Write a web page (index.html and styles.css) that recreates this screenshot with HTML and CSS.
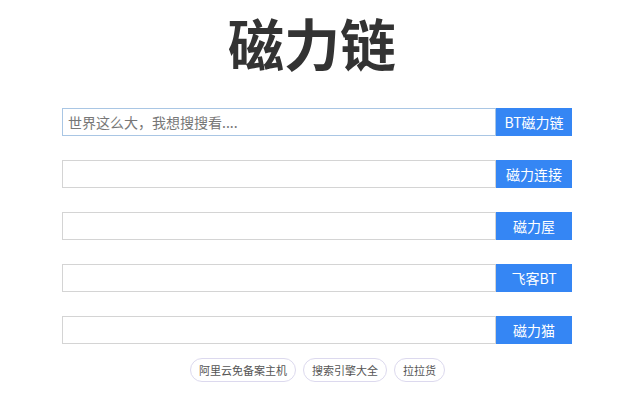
FILE: index.html
```html
<!DOCTYPE html>
<html lang="zh-CN">
<head>
    <meta charset="UTF-8">
    <meta name="viewport" content="width=device-width, initial-scale=1.0">
    <title>磁力链</title>
    <link rel="stylesheet" href="styles.css">
</head>
<body>
    <h1 class="logo">磁力链</h1>

    <div class="search-list">
        <form class="search-row">
            <input class="search-input focused" type="text" placeholder="世界这么大，我想搜搜看....">
            <button class="search-btn" type="button">BT磁力链</button>
        </form>
        <form class="search-row">
            <input class="search-input" type="text">
            <button class="search-btn" type="button">磁力连接</button>
        </form>
        <form class="search-row">
            <input class="search-input" type="text">
            <button class="search-btn" type="button">磁力屋</button>
        </form>
        <form class="search-row">
            <input class="search-input" type="text">
            <button class="search-btn" type="button">飞客BT</button>
        </form>
        <form class="search-row">
            <input class="search-input" type="text">
            <button class="search-btn" type="button">磁力猫</button>
        </form>
    </div>

    <div class="links">
        <a class="tag" href="#">阿里云免备案主机</a>
        <a class="tag" href="#">搜索引擎大全</a>
        <a class="tag" href="#">拉拉货</a>
    </div>
</body>
</html>
```

FILE: styles.css
```css
body {
    margin: 0;
    font-family: "Noto Sans CJK SC", "Liberation Sans", sans-serif;
    background: #fff;
    color: #333;
}
.logo {
    margin: 0;
    padding-top: 12px;
    height: 78px;
    text-align: center;
    font-size: 56px;
    line-height: 60px;
    font-weight: bold;
    color: #333;
    padding-right: 16px;
}
.search-list {
    width: 510px;
    margin-left: 62px;
    margin-top: 18px;
    display: flex;
    flex-direction: column;
    gap: 24px;
}
.search-row {
    display: flex;
    height: 28px;
    margin: 0;
}
.search-input {
    flex: 1;
    box-sizing: border-box;
    height: 28px;
    margin: 0;
    padding: 0 5px;
    border: 1px solid #d4d4d4;
    font-family: "Noto Sans CJK SC", sans-serif;
    font-size: 14px;
    color: #333;
    outline: none;
}
.search-input.focused {
    border-color: #a9c6e4;
}
.search-input::placeholder {
    color: #777;
}
.search-btn {
    width: 76px;
    height: 28px;
    margin: 0;
    border: none;
    background: #3586f4;
    color: #fff;
    font-family: "Noto Sans CJK SC", sans-serif;
    font-size: 14px;
    padding: 0;
}
.links {
    display: flex;
    justify-content: center;
    gap: 7px;
    margin-top: 14px;
    padding-right: 5px;
}
.tag {
    display: inline-block;
    height: 24px;
    line-height: 22px;
    box-sizing: border-box;
    padding: 0 8px;
    border: 1px solid #dcd9ee;
    border-radius: 12px;
    font-size: 11px;
    color: #555;
    text-decoration: none;
}
```
